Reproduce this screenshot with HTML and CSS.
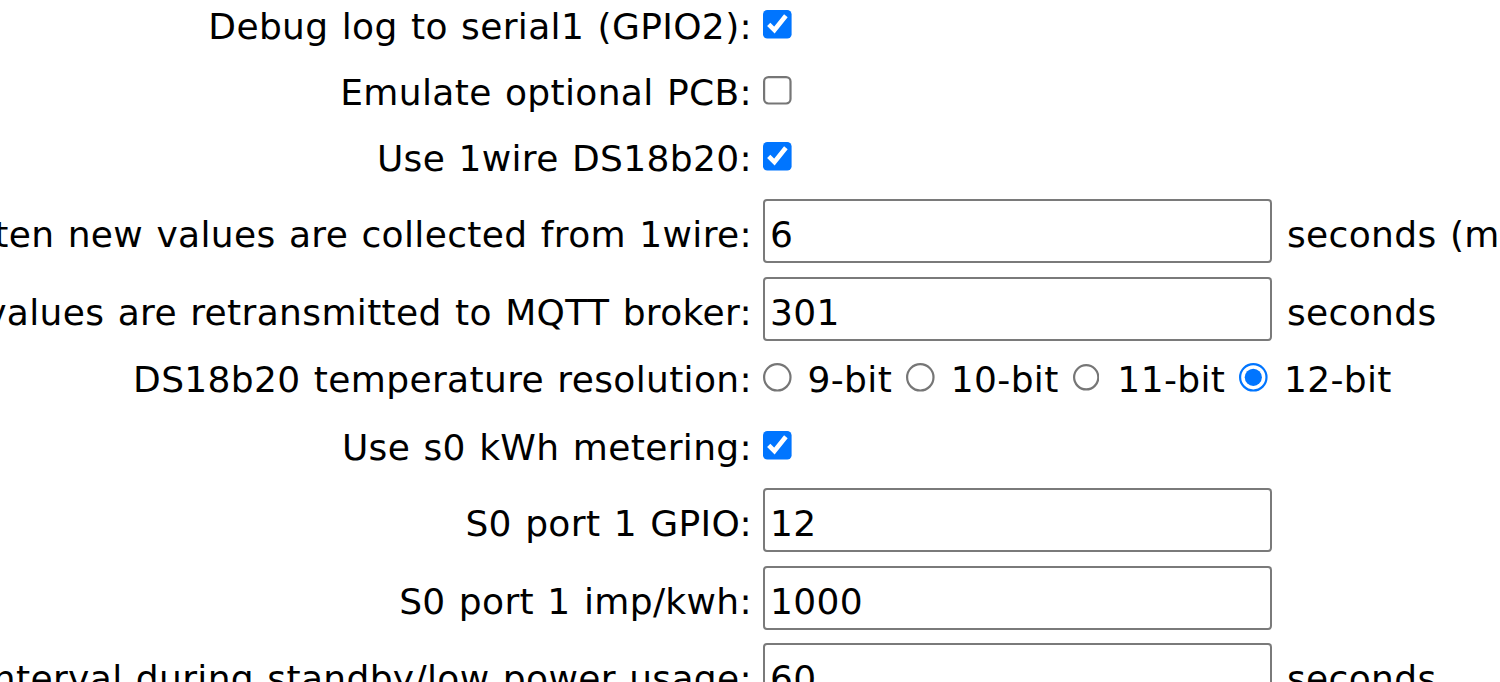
FILE: index.html
```html
<!DOCTYPE html>
<html lang="en">
<head>
<meta charset="utf-8">
<title>Settings</title>
<link rel="stylesheet" href="styles.css">
</head>
<body>
<div class="form">
  <div class="row row-check">
    <div class="lbl">Debug log to serial1 (GPIO2):</div>
    <div class="ctl"><input class="cb" type="checkbox" checked></div>
  </div>
  <div class="row row-check">
    <div class="lbl">Emulate optional PCB:</div>
    <div class="ctl"><input class="cb" type="checkbox"></div>
  </div>
  <div class="row row-check">
    <div class="lbl">Use 1wire DS18b20:</div>
    <div class="ctl"><input class="cb" type="checkbox" checked></div>
  </div>
  <div class="row row-input">
    <div class="lbl">How often new values are collected from 1wire:</div>
    <div class="ctl"><input class="txt" type="text" value="6"></div>
    <div class="sfx">seconds (min 5, max 3600)</div>
  </div>
  <div class="row row-input">
    <div class="lbl">How often all values are retransmitted to MQTT broker:</div>
    <div class="ctl"><input class="txt" type="text" value="301"></div>
    <div class="sfx">seconds</div>
  </div>
  <div class="row row-radio">
    <div class="lbl">DS18b20 temperature resolution:</div>
    <div class="ctl radios"><input class="rb" type="radio" name="res"> 9-bit <input class="rb" type="radio" name="res"> 10-bit <input class="rb" type="radio" name="res"> 11-bit <input class="rb" type="radio" name="res" checked> 12-bit</div>
  </div>
  <div class="row row-check">
    <div class="lbl">Use s0 kWh metering:</div>
    <div class="ctl"><input class="cb" type="checkbox" checked></div>
  </div>
  <div class="row row-input">
    <div class="lbl">S0 port 1 GPIO:</div>
    <div class="ctl"><input class="txt" type="text" value="12"></div>
  </div>
  <div class="row row-input">
    <div class="lbl">S0 port 1 imp/kwh:</div>
    <div class="ctl"><input class="txt" type="text" value="1000"></div>
  </div>
  <div class="row row-input">
    <div class="lbl">S0 port 1 interval during standby/low power usage:</div>
    <div class="ctl"><input class="txt" type="text" value="60"></div>
    <div class="sfx">seconds</div>
  </div>
</div>
</body>
</html>
```
FILE: styles.css
```css
html, body {
  margin: 0;
  padding: 0;
  overflow: hidden;
  background: #ffffff;
}

body {
  font-family: "DejaVu Sans", Verdana, sans-serif;
  font-size: 36px;
  letter-spacing: 0.35px;
  word-spacing: 1.5px;
  color: #000000;
}

.form {
  margin-top: -5px;
}

.row {
  display: flex;
  align-items: baseline;
  box-sizing: border-box;
  white-space: nowrap;
}

.row-check {
  height: 66px;
  padding-top: 11px;
}

.row-radio {
  height: 68px;
  padding-top: 11px;
}

.row-input {
  height: 77.5px;
  padding-top: 6px;
}

.lbl {
  flex: none;
  width: 752px;
  min-width: 0;
  display: flex;
  justify-content: flex-end;
  line-height: 42px;
}

.ctl {
  flex: none;
  margin-left: 11px;
  line-height: 42px;
}

.sfx {
  flex: none;
  margin-left: 15px;
  line-height: 42px;
}

.cb {
  zoom: 2.2;
  width: 13px;
  height: 13px;
  margin: 0 0 2.2px 0;
}

.rb {
  zoom: 2.2;
  width: 13px;
  height: 13px;
  margin: 0 1.2px 0 0.4px;
}

.rb:first-child {
  margin-left: 0;
}

.txt {
  box-sizing: border-box;
  width: 509px;
  height: 64px;
  margin: 0;
  padding: 7px 5px 0;
  border: 2px solid #7a7a7a;
  border-radius: 4px;
  font: inherit;
  letter-spacing: inherit;
  color: #000000;
  background: #ffffff;
  outline: none;
}
```
